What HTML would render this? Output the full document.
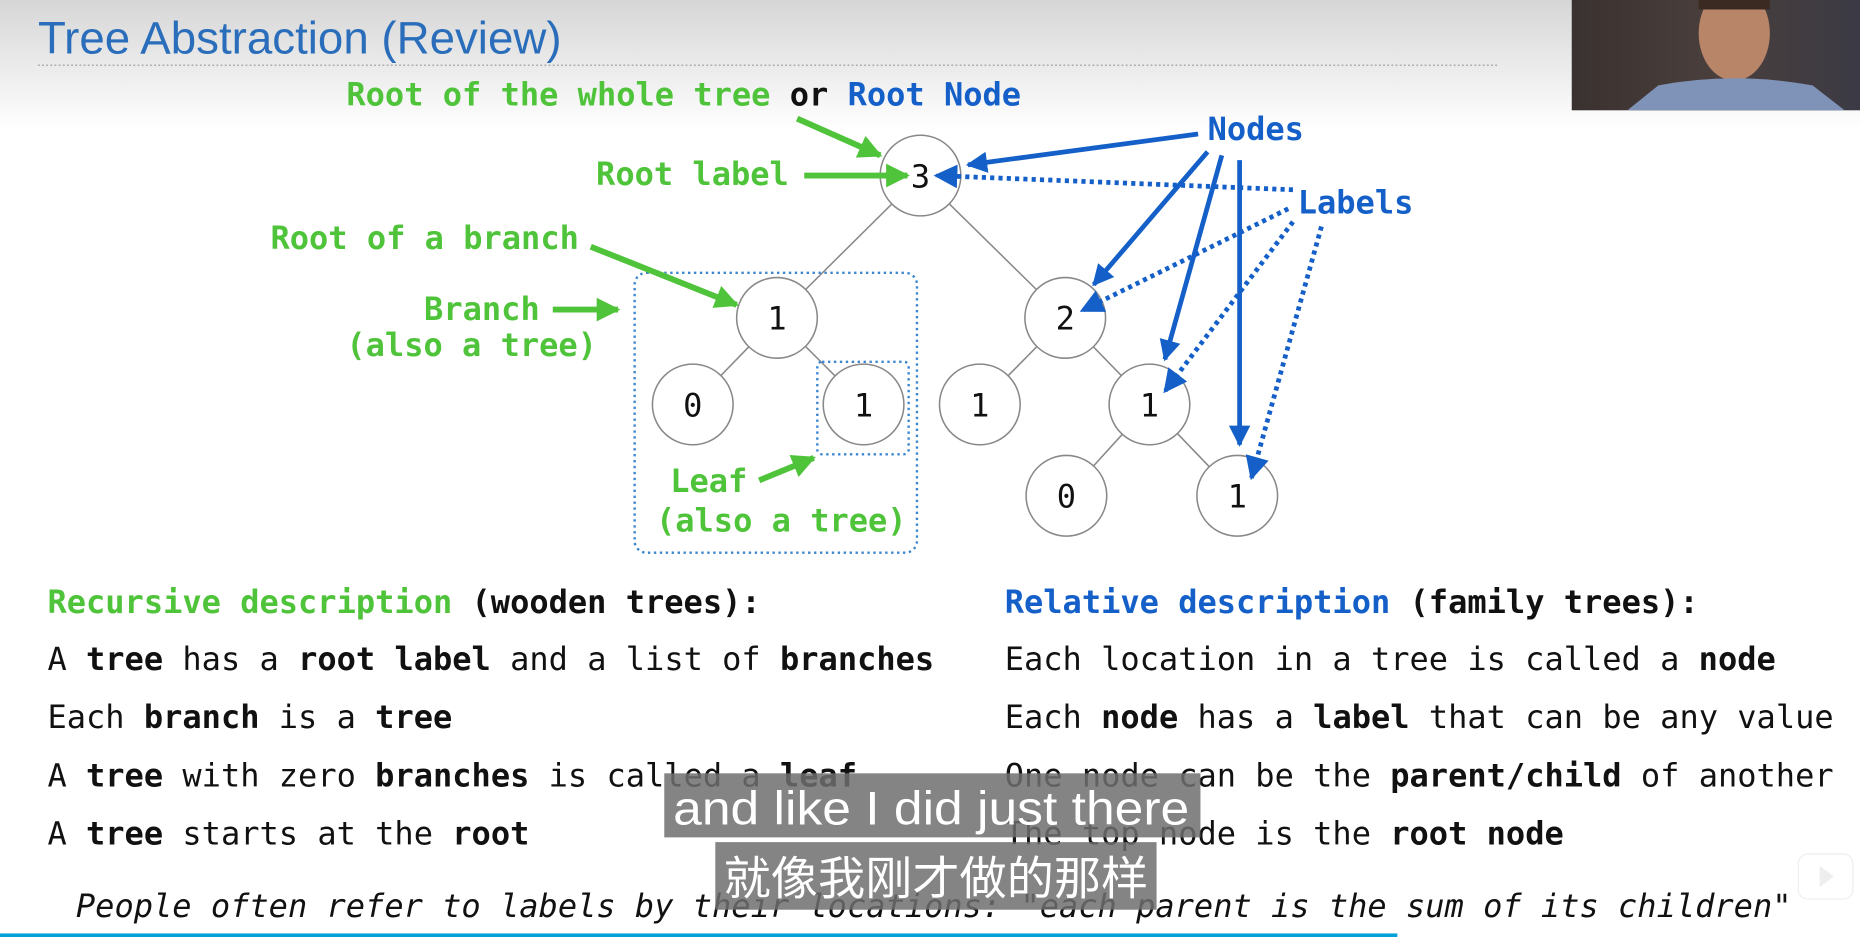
<!DOCTYPE html>
<html><head><meta charset="utf-8"><style>
html,body{margin:0;padding:0;width:1860px;height:937px;overflow:hidden;background:#fff}
svg{display:block}
.m{font-family:"DejaVu Sans Mono","Liberation Mono",monospace;font-size:27px}
.b{font-weight:bold}
.g{fill:#4fc43a}
.bl{fill:#1560c8}
.k{fill:#111}
</style></head><body>
<svg width="1860" height="937" viewBox="0 0 1568 790" preserveAspectRatio="none" xmlns="http://www.w3.org/2000/svg">
<defs>
<linearGradient id="bg" x1="0" y1="0" x2="0" y2="1">
<stop offset="0" stop-color="#d6d6d6"/><stop offset="1" stop-color="#ffffff"/>
</linearGradient>
<marker id="ag" viewBox="0 0 10 10" refX="9" refY="5" markerWidth="4" markerHeight="4" orient="auto"><path d="M0,0L10,5L0,10z" fill="#4fc43a"/></marker>
<marker id="ab" viewBox="0 0 10 10" refX="9" refY="5" markerWidth="4.5" markerHeight="4.5" orient="auto"><path d="M0,0L10,5L0,10z" fill="#1560c8"/></marker>
<marker id="abd" viewBox="0 0 10 10" refX="9" refY="5" markerWidth="5" markerHeight="5" orient="auto"><path d="M0,0L10,5L0,10z" fill="#1560c8"/></marker>
<linearGradient id="cam" x1="0" y1="0" x2="1" y2="0">
<stop offset="0" stop-color="#3a3230"/><stop offset="0.5" stop-color="#4a3f3c"/><stop offset="1" stop-color="#3b3a44"/>
</linearGradient>
</defs>
<rect x="0" y="0" width="1568" height="110" fill="url(#bg)"/>
<text x="32" y="45" font-family="Liberation Sans,sans-serif" font-size="38.5" fill="#2a6ebb">Tree Abstraction (Review)</text>
<line x1="32" y1="55" x2="1262" y2="55" stroke="#aaa" stroke-width="1.2" stroke-dasharray="1.5 2"/>
<!-- webcam -->
<rect x="1325" y="0" width="243" height="93" fill="url(#cam)"/>
<ellipse cx="1462" cy="28" rx="30" ry="40" fill="#b98568"/>
<path d="M1372,93 L1398,72 Q1462,60 1528,72 L1555,93 Z" fill="#7f93b8"/>
<rect x="1432" y="0" width="60" height="8" fill="#3a2a22"/>

<!-- tree edges -->
<g stroke="#888" stroke-width="1.3">
<line x1="776" y1="148" x2="655" y2="268"/><line x1="776" y1="148" x2="898" y2="268"/>
<line x1="655" y1="268" x2="584" y2="341"/><line x1="655" y1="268" x2="728" y2="341"/>
<line x1="898" y1="268" x2="826" y2="341"/><line x1="898" y1="268" x2="969" y2="341"/>
<line x1="969" y1="341" x2="899" y2="418"/><line x1="969" y1="341" x2="1043" y2="418"/>
</g>
<g fill="#fff" stroke="#888" stroke-width="1.3">
<circle cx="776" cy="148" r="34"/><circle cx="655" cy="268" r="34"/><circle cx="898" cy="268" r="34"/>
<circle cx="584" cy="341" r="34"/><circle cx="728" cy="341" r="34"/><circle cx="826" cy="341" r="34"/>
<circle cx="969" cy="341" r="34"/><circle cx="899" cy="418" r="34"/><circle cx="1043" cy="418" r="34"/>
</g>
<g class="m k" text-anchor="middle" font-size="29">
<text x="776" y="158">3</text><text x="655" y="278">1</text><text x="898" y="278">2</text>
<text x="584" y="351">0</text><text x="728" y="351">1</text><text x="826" y="351">1</text>
<text x="969" y="351">1</text><text x="899" y="428">0</text><text x="1043" y="428">1</text>
</g>
<!-- dotted boxes -->
<rect x="535" y="230" width="238" height="236" rx="10" fill="none" stroke="#3c86d0" stroke-width="2" stroke-dasharray="2 3"/>
<rect x="689" y="305" width="77" height="78" rx="4" fill="none" stroke="#3c86d0" stroke-width="2" stroke-dasharray="2 3"/>

<!-- labels -->
<text class="m b" x="292" y="89"><tspan class="g">Root of the whole tree</tspan><tspan class="k"> or </tspan><tspan class="bl">Root Node</tspan></text>
<text class="m b g" x="665" y="156" text-anchor="end">Root label</text>
<text class="m b g" x="228" y="210">Root of a branch</text>
<text class="m b g" x="455" y="270" text-anchor="end">Branch</text>
<text class="m b g" x="292" y="300">(also a tree)</text>
<text class="m b g" x="565" y="415">Leaf</text>
<text class="m b g" x="553" y="448">(also a tree)</text>
<text class="m b bl" x="1018" y="118">Nodes</text>
<text class="m b bl" x="1094" y="180">Labels</text>

<!-- green arrows -->
<g stroke="#4fc43a" stroke-width="5" fill="none" marker-end="url(#ag)">
<line x1="672" y1="100" x2="742" y2="131"/>
<line x1="678" y1="148" x2="765" y2="148"/>
<line x1="498" y1="208" x2="621" y2="257"/>
<line x1="466" y1="261" x2="521" y2="261"/>
<line x1="640" y1="405" x2="686" y2="386"/>
</g>
<!-- blue solid -->
<g stroke="#1560c8" stroke-width="4" fill="none" marker-end="url(#ab)">
<line x1="1010" y1="113" x2="816" y2="139"/>
<line x1="1018" y1="128" x2="922" y2="240"/>
<line x1="1030" y1="131" x2="982" y2="303"/>
<line x1="1045" y1="135" x2="1045" y2="375"/>
</g>
<!-- blue dotted -->
<g stroke="#1560c8" stroke-width="4" fill="none" stroke-dasharray="3.5 3.5" marker-end="url(#abd)">
<line x1="1090" y1="160" x2="789" y2="148"/>
<line x1="1086" y1="176" x2="912" y2="262"/>
<line x1="1090" y1="187" x2="982" y2="330"/>
<line x1="1114" y1="191" x2="1055" y2="403"/>
</g>

<!-- descriptions -->
<text class="m b" x="40" y="517"><tspan class="g">Recursive description</tspan><tspan class="k"> (wooden trees):</tspan></text>
<text class="m k" x="40" y="565">A <tspan class="b">tree</tspan> has a <tspan class="b">root label</tspan> and a list of <tspan class="b">branches</tspan></text>
<text class="m k" x="40" y="614">Each <tspan class="b">branch</tspan> is a <tspan class="b">tree</tspan></text>
<text class="m k" x="40" y="663">A <tspan class="b">tree</tspan> with zero <tspan class="b">branches</tspan> is called a <tspan class="b">leaf</tspan></text>
<text class="m k" x="40" y="712">A <tspan class="b">tree</tspan> starts at the <tspan class="b">root</tspan></text>

<text class="m b" x="847" y="517"><tspan class="bl">Relative description</tspan><tspan class="k"> (family trees):</tspan></text>
<text class="m k" x="847" y="565">Each location in a tree is called a <tspan class="b">node</tspan></text>
<text class="m k" x="847" y="614">Each <tspan class="b">node</tspan> has a <tspan class="b">label</tspan> that can be any value</text>
<text class="m k" x="847" y="663">One node can be the <tspan class="b">parent/child</tspan> of another</text>
<text class="m k" x="847" y="712">The top node is the <tspan class="b">root node</tspan></text>

<text class="m k" x="64" y="773" font-style="italic" font-size="26.5">People often refer to labels by their locations: "each parent is the sum of its children"</text>

<!-- subtitles -->
<rect x="560" y="652" width="452" height="54" fill="#6e6e6e" fill-opacity="0.85"/>
<text x="785" y="695" text-anchor="middle" font-family="Liberation Sans,sans-serif" font-size="40" textLength="435" lengthAdjust="spacingAndGlyphs" fill="#fff">and like I did just there</text>
<rect x="603" y="710" width="372" height="57" fill="#6e6e6e" fill-opacity="0.85"/>
<text x="789" y="754" text-anchor="middle" font-family="'Noto Sans CJK SC',sans-serif" font-size="39" textLength="358" lengthAdjust="spacingAndGlyphs" fill="#fff">就像我刚才做的那样</text>

<!-- bilibili icon -->
<rect x="1516" y="720" width="46" height="38" rx="8" fill="#fff" stroke="#eee"/>
<path d="M1534,730 L1546,739 L1534,748 Z" fill="#eee"/>
<!-- progress -->
<rect x="0" y="787" width="1178" height="3" fill="#00a1d6"/>
</svg>
</body></html>
